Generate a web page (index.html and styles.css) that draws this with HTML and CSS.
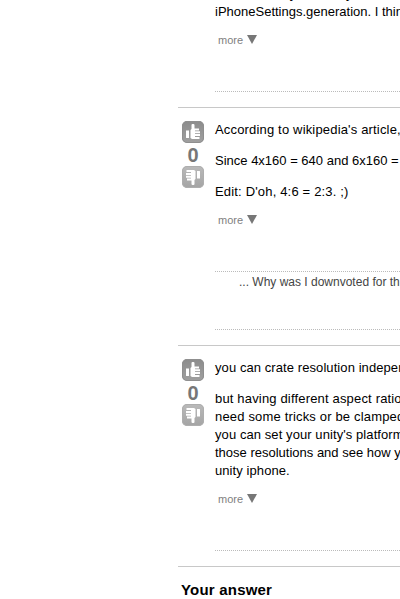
FILE: index.html
```html
<!DOCTYPE html>
<html lang="en">
<head>
<meta charset="utf-8">
<title>Answers</title>
<link rel="stylesheet" href="styles.css">
</head>
<body>
<svg class="defs" aria-hidden="true">
  <defs>
    <linearGradient id="up-bg" x1="0" y1="0" x2="0" y2="1"><stop offset="0" stop-color="#8c8c8c"/><stop offset="1" stop-color="#a0a0a0"/></linearGradient>
    <linearGradient id="down-bg" x1="0" y1="0" x2="0" y2="1"><stop offset="0" stop-color="#bababa"/><stop offset="1" stop-color="#a4a4a4"/></linearGradient>
    <symbol id="hand" viewBox="0 0 22 22">
      <path fill="#fff" d="M4 9.500h3V17H4.500q-.500 0-.500-.500zM8.500 9L9.500 8V4q0-1 1-1h.800q1.200 0 1.200 1v3.500H17V9.500h-4v.800h5v2h-5v.800h5v2h-5v.800h4.500V18H10l-1.500-1z"/>
    </symbol>
    <symbol id="up" viewBox="0 0 22 22"><rect width="22" height="22" rx="5" fill="url(#up-bg)"/><rect x=".5" y=".5" width="21" height="21" rx="4.500" fill="none" stroke="#8f8f8f"/><use href="#hand"/></symbol>
    <symbol id="down" viewBox="0 0 22 22"><rect width="22" height="22" rx="5" fill="url(#down-bg)"/><rect x=".5" y=".5" width="21" height="21" rx="4.500" fill="none" stroke="#aeaeae"/><use href="#hand" transform="rotate(180 11 11)"/></symbol>
  </defs>
</svg>
<main class="answers">
  <article class="answer first">
    <div class="body">
      <p>You can verify the unit you are on<br><span class="l1">iPhoneSettings.generation. I think</span></p>
      <div class="more">more <i class="arrow"></i></div>
      <div class="comments"></div>
    </div>
  </article>
  <article class="answer">
    <div class="votes"><svg><use href="#up"/></svg><b>0</b><svg><use href="#down"/></svg></div>
    <div class="body">
      <p><span class="wide">According to wikipedia's article,</span></p>
      <p><span class="l3">Since 4x160 = 640 and 6x160 = 960</span></p>
      <p><span class="wide">Edit: D'oh, 4:6 = 2:3. ;)</span></p>
      <div class="more">more <i class="arrow"></i></div>
      <div class="comments"><div class="comment">... Why was I downvoted for this</div></div>
    </div>
  </article>
  <article class="answer">
    <div class="votes"><svg><use href="#up"/></svg><b>0</b><svg><use href="#down"/></svg></div>
    <div class="body">
      <p><span class="l5">you can crate resolution independent</span></p>
      <p><span class="wide">but having different aspect ratios</span><br><span class="wide">need some tricks or be clamped</span><br><span class="l8">you can set your unity's platform</span><br><span class="l9">those resolutions and see how your</span><br><span class="l10">unity iphone.</span></p>
      <div class="more">more <i class="arrow"></i></div>
      <div class="comments"></div>
    </div>
  </article>
  <h2>Your answer</h2>
</main>
</body>
</html>
```
FILE: styles.css
```css
body { margin: 0; background: #fff; color: #000; font: 13px/18px "Liberation Sans", Arial, sans-serif; overflow: hidden; }
.defs { position: absolute; width: 0; height: 0; }
.answers { margin-left: 178px; height: 599px; overflow: hidden; white-space: nowrap; }
.answer { display: flex; border-bottom: 1px solid #c8c8c8; padding: 13px 0 15px 3px; }
.answer.first { padding: 0 0 15px 37px; margin-top: -15px; }
.votes { width: 24px; margin-right: 10px; display: flex; flex-direction: column; align-items: center; }
.votes svg { width: 22px; height: 22px; flex: none; }
.votes b { height: 23px; font-size: 20px; line-height: 25px; color: #777; }
.body { flex: 1; min-width: 0; }
p { margin: 0 0 13px; }
.wide { letter-spacing: .17px; }
.l5, .l8, .l10 { letter-spacing: .08px; }
.more { display: flex; align-items: center; height: 14px; padding-left: 3px; margin-top: -1px; font-size: 11px; line-height: 14px; color: #808080; }
.arrow { margin: 0 0 2px 4px; border: 5px solid transparent; border-top: 9px solid #777; border-bottom: 0; }
.comments { margin-top: 44px; border-top: 1px dotted #bbb; }
.comment { height: 57px; border-bottom: 1px dotted #bbb; padding-left: 24px; line-height: 20px; font-size: 12px; color: #444; }
h2 { margin: 14px 0 0 3px; font-size: 15px; line-height: 18px; letter-spacing: .2px; }
```
